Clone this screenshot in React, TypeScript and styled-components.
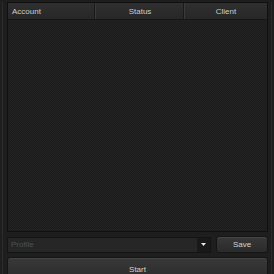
import React from "react";
import styled, { createGlobalStyle } from "styled-components";

const Global = createGlobalStyle`
  html, body { margin: 0; padding: 0; background: #1c1c1c; }
  body { font-family: "Liberation Sans", Arial, sans-serif; font-size: 8px; }
`;

const Page = styled.div`
  width: 274px;
  height: 274px;
  box-sizing: border-box;
  padding: 2px 2px 0 2px;
  background: #1e1e1e;
  display: flex;
  overflow: hidden;
`;

const Frame = styled.div`
  flex: 1;
  display: flex;
  flex-direction: column;
  border-left: 1px solid #2c2c2c;
  border-right: 1px solid #2a2a2a;
  padding: 0 3px 0 4px;
  gap: 4px;
`;

const List = styled.div`
  height: 230px;
  flex-shrink: 0;
  box-sizing: border-box;
  border: 1px solid #101010;
  background-color: #1f1f1f;
  background-image: repeating-conic-gradient(#222222 0 25%, #1c1c1c 0 50%);
  background-size: 2px 2px;
  display: flex;
  flex-direction: column;
`;

const Header = styled.div`
  display: grid;
  grid-template-columns: 88px 89px 1fr;
  height: 16px;
  background: linear-gradient(#2f2f2f, #272727);
  border-bottom: 1px solid #161616;
`;

const HeadCell = styled.div<{ $align?: string }>`
  display: flex;
  align-items: center;
  justify-content: ${(p) => p.$align || "flex-start"};
  padding-left: ${(p) => (p.$align === "center" ? "0" : "4px")};
  color: #cdcdcd;
  font-size: 8px;
  border-right: 1px solid #3a3a3a;
  box-shadow: inset -1px 0 0 #1a1a1a;
  &:last-child { border-right: none; box-shadow: none; }
`;

const Controls = styled.div`
  display: flex;
  flex-shrink: 0;
  gap: 5px;
  height: 17px;
  align-items: center;
`;

const Combo = styled.div`
  flex: 1;
  height: 16px;
  box-sizing: border-box;
  border: 1px solid #141414;
  background: #262626;
  display: flex;
  align-items: center;
  color: #505050;
  font-size: 8px;
  padding-left: 3px;
`;

const ComboText = styled.span`
  flex: 1;
`;

const Arrow = styled.div`
  width: 13px;
  height: 14px;
  background: #191919;
  display: flex;
  align-items: center;
  justify-content: center;
`;

const Button = styled.div`
  height: 17px;
  flex-shrink: 0;
  box-sizing: border-box;
  border: 1px solid #151515;
  border-radius: 3px;
  background: linear-gradient(#383838, #2b2b2b);
  box-shadow: inset 0 1px 0 #444;
  color: #d4d4d4;
  font-size: 8px;
  display: flex;
  align-items: center;
  justify-content: center;
`;

const SaveButton = styled(Button)`
  width: 52px;
`;

const StartButton = styled(Button)`
  height: 24px;
  align-items: flex-start;
  padding-top: 7px;
`;

export default function App() {
  return (
    <>
      <Global />
      <Page>
        <Frame>
          <List>
            <Header>
              <HeadCell>Account</HeadCell>
              <HeadCell $align="center">Status</HeadCell>
              <HeadCell $align="center">Client</HeadCell>
            </Header>
          </List>
          <Controls>
            <Combo>
              <ComboText>Profile</ComboText>
              <Arrow>
                <svg width="5" height="3" viewBox="0 0 5 3">
                  <polygon points="0,0 5,0 2.5,3" fill="#e8e8e8" />
                </svg>
              </Arrow>
            </Combo>
            <SaveButton>Save</SaveButton>
          </Controls>
          <StartButton>Start</StartButton>
        </Frame>
      </Page>
    </>
  );
}
